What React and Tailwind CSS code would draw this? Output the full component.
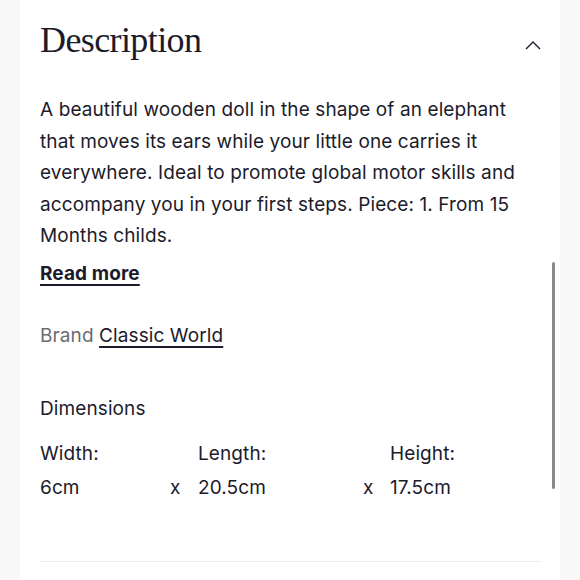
import React from "react";

export default function App() {
  const sans = { fontFamily: "Inter, 'Noto Sans', sans-serif" };
  return (
    <div className="flex h-[580px] w-[580px] bg-[#f8f8f8] px-[20px] overflow-hidden">
      <div className="relative flex-1 bg-white pl-[20px] pr-[19px]" style={sans}>
        <div className="flex items-start justify-between pt-[16px]">
          <h2
            className="text-[36px] leading-[48px] tracking-[-0.6px] text-[#1c1b2b]"
            style={{ fontFamily: "'Liberation Serif', 'DejaVu Serif', serif" }}
          >
            Description
          </h2>
          <svg width="16" height="10" viewBox="0 0 16 10" className="mt-[24px] mr-[0px]">
            <path d="M1 9 L8 2 L15 9" fill="none" stroke="#1c1b2b" strokeWidth="1.4" />
          </svg>
        </div>
        <p className="mt-[30px] text-[19px] leading-[31.6px] tracking-[0.1px] text-[#1c1b2b] pr-[10px]">
          A beautiful wooden doll in the shape of an elephant that moves its ears while your little one carries it
          everywhere. Ideal to promote global motor skills and accompany you in your first steps. Piece: 1. From 15
          Months childs.
        </p>
        <div className="mt-[8px] text-[19px] font-bold leading-[28px] tracking-[0.1px] text-[#1c1b2b] underline underline-offset-[4px] decoration-[1.5px]">
          Read more
        </div>
        <div className="mt-[34px] text-[19px] leading-[28px] tracking-[0.1px]">
          <span className="text-[#6b6b70]">Brand </span>
          <span className="text-[#1c1b2b] underline underline-offset-[4px] decoration-[1.5px]">Classic World</span>
        </div>
        <div className="mt-[45px] text-[19px] leading-[28px] tracking-[0.1px] text-[#1c1b2b]">Dimensions</div>
        <div className="mt-[14px] grid grid-cols-[130px_28px_165px_27px_1fr] text-[19px] leading-[34px] tracking-[0.1px] text-[#1c1b2b]">
          <div>Width:</div>
          <div></div>
          <div>Length:</div>
          <div></div>
          <div>Height:</div>
          <div>6cm</div>
          <div>x</div>
          <div>20.5cm</div>
          <div>x</div>
          <div>17.5cm</div>
        </div>
        <div className="absolute left-[20px] right-[19px] top-[561px] h-[1px] bg-[#ececec]" />
        <div className="absolute right-[5px] top-[262px] h-[227px] w-[3px] rounded-full bg-[#8a8a8a]" />
      </div>
    </div>
  );
}
